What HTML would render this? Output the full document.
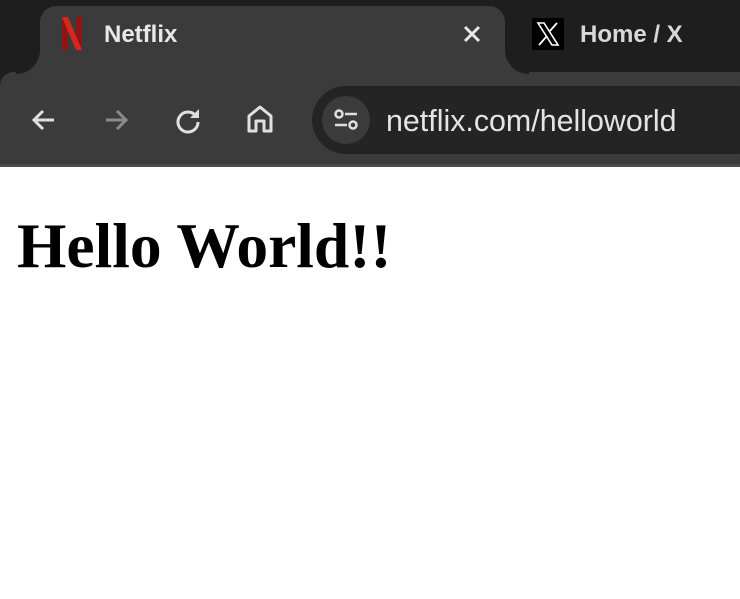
<!DOCTYPE html>
<html><head><meta charset="utf-8"><style>
*{margin:0;padding:0;box-sizing:border-box}
body{width:740px;height:599px;overflow:hidden;background:#fff;position:relative;font-family:"Liberation Sans",sans-serif}
.strip{position:absolute;left:0;top:0;width:740px;height:100px;background:#1e1e1e}
.tab{position:absolute;left:40px;top:6px;width:465px;height:70px;background:#3b3b3b;border-radius:16px 16px 0 0}
.flare{position:absolute;top:50px;width:24px;height:24px;background:#3b3b3b}
.flare i{position:absolute;inset:0;background:#1e1e1e}
.tool{position:absolute;left:0;top:72px;width:740px;height:94px;background:#3b3b3b;border-radius:14px 0 0 0}
.line{position:absolute;left:0;top:164px;width:740px;height:3px;background:#4a4a4a}
.omni{position:absolute;left:312px;top:86px;width:460px;height:68px;background:#242424;border-radius:34px}
.circ{position:absolute;left:322px;top:96px;width:48px;height:48px;border-radius:24px;background:#3b3b3b}
.t{position:absolute;color:#e8e8e8;font-size:24px}
h1{position:absolute;left:17px;top:208px;font-family:"Liberation Serif",serif;font-weight:bold;font-size:63.5px;line-height:76px;color:#000}
</style></head><body>
<div class="strip"></div>
<div class="tool"></div>
<div class="tab"></div>
<div class="flare" style="left:16px"><i style="border-radius:0 0 24px 0"></i></div>
<div class="flare" style="left:505px"><i style="border-radius:0 0 0 24px"></i></div>
<div class="line"></div>
<svg style="position:absolute;left:62px;top:17px" width="20" height="33" viewBox="0 0 20 33"><path d="M0 0h6v33H0z" fill="#8f1515"/><path d="M14 0h6v33h-6z" fill="#8f1515"/><path d="M0 0h6l14 33h-6z" fill="#d7261e"/></svg>
<div class="t" style="left:104px;top:21px;font-size:24px;font-weight:bold">Netflix</div>
<svg style="position:absolute;left:462px;top:24px" width="20" height="20" viewBox="0 0 20 20"><path d="M3 3L17 17M17 3L3 17" stroke="#e8e8e8" stroke-width="3"/></svg>
<div style="position:absolute;left:532px;top:18px;width:32px;height:32px;background:#000"></div>
<svg style="position:absolute;left:535px;top:21px" width="26" height="26" viewBox="0 0 26 26"><path d="M3 2h6l14 22h-6z" fill="none" stroke="#fff" stroke-width="1.6"/><path d="M22 2L14 11M4 24l8-9" stroke="#fff" stroke-width="1.8"/></svg>
<div class="t" style="left:580px;top:21px;color:#d8d8d8;font-size:24px;font-weight:bold">Home / X</div>
<svg style="position:absolute;left:30px;top:106px" width="28" height="28" viewBox="0 0 28 28"><path d="M24 14H5M13 5l-9 9 9 9" fill="none" stroke="#e0e0e0" stroke-width="3"/></svg>
<svg style="position:absolute;left:102px;top:106px" width="28" height="28" viewBox="0 0 28 28"><path d="M4 14h19M15 5l9 9-9 9" fill="none" stroke="#8a8a8a" stroke-width="3"/></svg>
<svg style="position:absolute;left:174px;top:106px" width="28" height="28" viewBox="0 0 28 28"><path d="M22 10A10 10 0 1 0 24 16" fill="none" stroke="#e0e0e0" stroke-width="3"/><path d="M25 3v9h-9z" fill="#e0e0e0"/></svg>
<svg style="position:absolute;left:246px;top:104px" width="28" height="30" viewBox="0 0 28 30"><path d="M3 12L14 3l11 9v15h-7v-10h-8v10H3z" fill="none" stroke="#e0e0e0" stroke-width="3" stroke-linejoin="round"/></svg>
<div class="omni"></div>
<div class="circ"></div>
<svg style="position:absolute;left:332px;top:106px" width="28" height="28" viewBox="0 0 28 28"><circle cx="7" cy="8" r="3.5" fill="none" stroke="#e0e0e0" stroke-width="2.5"/><path d="M13 8h12M3 19h12" stroke="#e0e0e0" stroke-width="2.5"/><circle cx="21" cy="19" r="3.5" fill="none" stroke="#e0e0e0" stroke-width="2.5"/></svg>
<div class="t" style="left:386px;top:104px;font-size:30.4px;color:#e4e4e4">netflix.com/helloworld</div>
<h1>Hello World!!</h1>
</body></html>
